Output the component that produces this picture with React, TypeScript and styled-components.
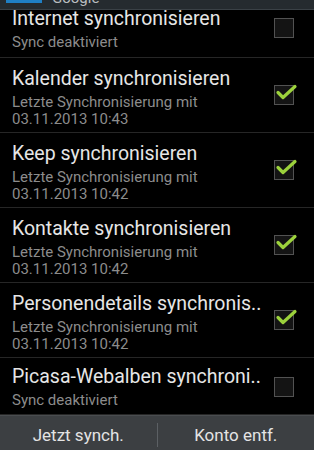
import React from "react";
import styled, { createGlobalStyle } from "styled-components";

const Global = createGlobalStyle`
  html, body { margin: 0; padding: 0; background: #000; }
  body { width: 314px; height: 450px; overflow: hidden; font-family: Roboto, "Noto Sans", sans-serif; }
`;

const Screen = styled.div`
  width: 314px;
  height: 450px;
  display: flex;
  flex-direction: column;
  background: #000;
  overflow: hidden;
`;

const Header = styled.div`
  height: 10px;
  flex: none;
  background: #252b2f;
  border-bottom: 1px solid #3a4146;
  box-sizing: border-box;
  display: flex;
  align-items: flex-end;
  gap: 10px;
  padding-left: 6px;
  overflow: hidden;
  position: relative;
  z-index: 1;
`;

const HeaderTab = styled.div`
  width: 36px;
  height: 3px;
  background: #1f7fc4;
  align-self: flex-start;
`;

const HeaderTitle = styled.div`
  font-size: 15px;
  line-height: 15px;
  color: #b8bcbf;
  margin-bottom: 3px;
`;

const List = styled.div`
  flex: 1;
  display: flex;
  flex-direction: column;
  overflow: hidden;
`;

const Row = styled.div<{ $h: number }>`
  height: ${(p) => p.$h}px;
  flex: none;
  box-sizing: border-box;
  border-bottom: 1px solid #262626;
  display: flex;
  align-items: center;
  padding: 4px 20px 0 12px;
`;

const Texts = styled.div<{ $shift: number }>`
  flex: 1;
  min-width: 0;
  display: flex;
  flex-direction: column;
  margin-top: ${(p) => p.$shift}px;
`;

const Title = styled.div`
  font-size: 19.5px;
  line-height: 24px;
  color: #e6e6e6;
  white-space: nowrap;
`;

const Sub = styled.div`
  font-size: 15px;
  line-height: 16.5px;
  color: #8c8c8c;
  margin-top: 3px;
  white-space: nowrap;
`;

const Box = styled.div<{ $shift: number }>`
  width: 20px;
  height: 20px;
  flex: none;
  box-sizing: border-box;
  border: 1.5px solid #525252;
  background: #141414;
  position: relative;
  margin-left: 8px;
  margin-top: ${(p) => p.$shift}px;
`;

const Check = styled.svg`
  position: absolute;
  left: -1.5px;
  top: -1.5px;
  width: 24px;
  height: 20px;
  overflow: visible;
`;

const Bottom = styled.div`
  height: 35px;
  flex: none;
  background: #3c3f42;
  border-top: 1px solid #4a4d50;
  box-sizing: border-box;
  display: flex;
  align-items: center;
  padding-top: 4px;
`;

const BtnLabel = styled.div`
  flex: 1;
  text-align: center;
  font-size: 17px;
  color: #e4e4e4;
`;

const Sep = styled.div`
  width: 1px;
  height: 24px;
  background: #5c6064;
`;

type Item = { title: string; sub: string[]; checked: boolean; h: number; shift: number; box: number };

const items: Item[] = [
  { title: "Internet synchronisieren", sub: ["Sync deaktiviert"], checked: false, h: 48, shift: -13, box: -15 },
  { title: "Kalender synchronisieren", sub: ["Letzte Synchronisierung mit", "03.11.2013 10:43"], checked: true, h: 75, shift: 0, box: -4 },
  { title: "Keep synchronisieren", sub: ["Letzte Synchronisierung mit", "03.11.2013 10:42"], checked: true, h: 75, shift: 0, box: -4 },
  { title: "Kontakte synchronisieren", sub: ["Letzte Synchronisierung mit", "03.11.2013 10:42"], checked: true, h: 75, shift: 0, box: -4 },
  { title: "Personendetails synchronis..", sub: ["Letzte Synchronisierung mit", "03.11.2013 10:42"], checked: true, h: 75, shift: 0, box: -4 },
  { title: "Picasa-Webalben synchroni..", sub: ["Sync deaktiviert"], checked: false, h: 57, shift: -2, box: -2 },
];

const CheckBox = ({ checked, shift }: { checked: boolean; shift: number }) => (
  <Box $shift={shift}>
    {checked && (
      <Check viewBox="0 0 24 20">
        <path d="M4 7.5 L9 12.5 L21 1.5" fill="none" stroke="#9cd23c" strokeWidth="3.2" strokeLinecap="round" strokeLinejoin="round" />
      </Check>
    )}
  </Box>
);

export default function App() {
  return (
    <Screen>
      <Global />
      <Header>
        <HeaderTab />
        <HeaderTitle>Google</HeaderTitle>
      </Header>
      <List>
        {items.map((it) => (
          <Row key={it.title} $h={it.h}>
            <Texts $shift={it.shift}>
              <Title>{it.title}</Title>
              <Sub>
                {it.sub.map((s) => (
                  <div key={s}>{s}</div>
                ))}
              </Sub>
            </Texts>
            <CheckBox checked={it.checked} shift={it.box} />
          </Row>
        ))}
      </List>
      <Bottom>
        <BtnLabel>Jetzt synch.</BtnLabel>
        <Sep />
        <BtnLabel>Konto entf.</BtnLabel>
      </Bottom>
    </Screen>
  );
}
